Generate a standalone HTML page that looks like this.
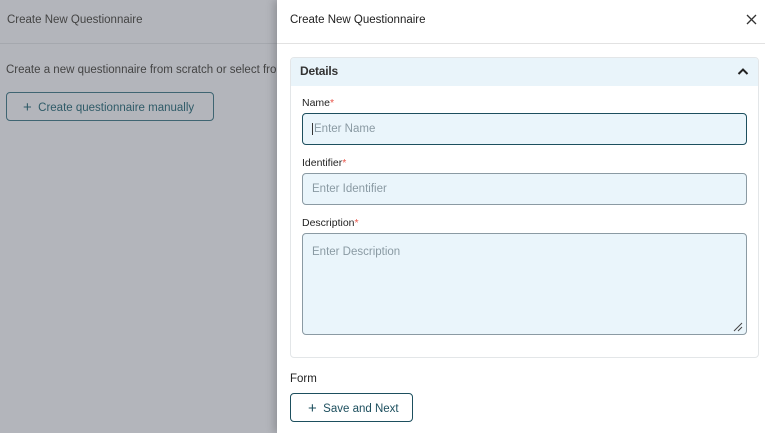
<!DOCTYPE html>
<html><head><style>
*{box-sizing:border-box;margin:0;padding:0}
body{width:765px;height:433px;overflow:hidden;font-family:"Liberation Sans",sans-serif;background:#fff;position:relative}
.l{position:absolute;left:0;top:0;width:277px;height:433px;background:#b3b5bb}
.abs{position:absolute;white-space:nowrap}
.d{position:absolute;left:277px;top:0;width:488px;height:433px;background:#fff;box-shadow:-3px 0 8px rgba(0,0,0,.2)}
.inp{position:absolute;left:25px;width:445px;border:1px solid #8b9aa3;border-radius:4px;background:#eaf5fb;font-size:11.5px;color:#8a9aa3;padding-left:9px}
.lab{position:absolute;left:25px;font-size:10.5px;color:#222}
.lab b{color:#e8554a;font-weight:normal}
.pl{font-size:15px;font-weight:300;vertical-align:-1px}
</style></head><body>
<div class="l">
 <div class="abs" style="left:7px;top:14px;font-size:11.5px;color:#444">Create New Questionnaire</div>
 <div class="abs" style="left:0;top:43px;width:277px;height:1px;background:#a5a8ae"></div>
 <div class="abs" style="left:6px;top:64px;font-size:11.5px;color:#444">Create a new questionnaire from scratch or select from</div>
 <div class="abs" style="left:6px;top:92px;width:208px;height:29px;border:1px solid #3f6572;border-radius:4px;font-size:11.5px;color:#2f5b68;padding:6px 0 0 16px"><span class="pl">+</span>&nbsp;&nbsp;Create questionnaire manually</div>
</div>
<div class="d">
 <div class="abs" style="left:13px;top:14px;font-size:11.5px;color:#222">Create New Questionnaire</div>
 <svg class="abs" style="left:469px;top:14px" width="11" height="11" viewBox="0 0 11 11"><path d="M1 1L10 10M10 1L1 10" stroke="#333" stroke-width="1.3"/></svg>
 <div class="abs" style="left:0;top:43px;width:488px;height:1px;background:#e2e2e2"></div>
 <div class="abs" style="left:13px;top:57px;width:469px;height:301px;border:1px solid #e3e6e8;border-radius:4px;overflow:hidden">
  <div style="height:28px;background:#e9f4fa;font-size:12px;color:#333;padding:6px 0 0 9px;font-weight:bold;letter-spacing:-.2px">Details</div>
  <svg class="abs" style="left:446px;top:9px" width="12" height="9" viewBox="0 0 12 9"><path d="M1.5 7L6 2.5L10.5 7" stroke="#222" stroke-width="2" fill="none"/></svg>
 </div>
 <div class="lab" style="top:97px">Name<b>*</b></div>
 <div class="inp" style="top:113px;height:32px;border-color:#1d4f5e;padding-top:9px"><span style="border-left:1.5px solid #333;padding-left:1px">Enter Name</span></div>
 <div class="lab" style="top:157px">Identifier<b>*</b></div>
 <div class="inp" style="top:173px;height:32px;padding-top:9px">Enter Identifier</div>
 <div class="lab" style="top:217px">Description<b>*</b></div>
 <div class="inp" style="top:233px;height:102px;padding-top:12px">Enter Description</div>
 <svg class="abs" style="left:456px;top:322px" width="10" height="10"><path d="M1 9L9 1M5 9L9 5" stroke="#444" stroke-width="1"/></svg>
 <div class="abs" style="left:13px;top:373px;font-size:11.5px;color:#222">Form</div>
 <div class="abs" style="left:13px;top:393px;width:123px;height:29px;border:1px solid #1d4f5e;border-radius:4px;font-size:11.5px;color:#1d4f5e;padding:6px 0 0 17px"><span class="pl">+</span>&nbsp;&nbsp;Save and Next</div>
</div>
</body></html>
